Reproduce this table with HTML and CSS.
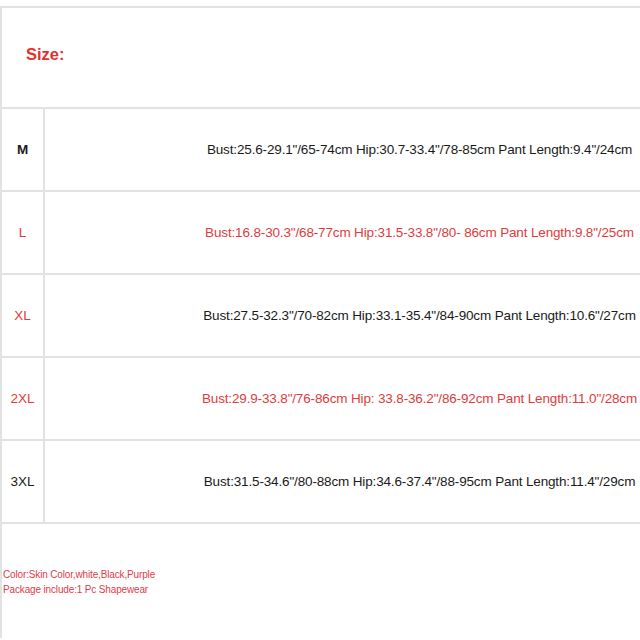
FILE: index.html
```html
<!DOCTYPE html>
<html>
<head>
<meta charset="utf-8">
<link rel="stylesheet" href="styles.css">
</head>
<body>
<div class="page">
  <div class="chart">
    <div class="head"><span class="title">Size:</span></div>
    <div class="row">
      <div class="size bold">M</div>
      <div class="spec">Bust:25.6-29.1"/65-74cm Hip:30.7-33.4"/78-85cm Pant Length:9.4"/24cm</div>
    </div>
    <div class="row red">
      <div class="size">L</div>
      <div class="spec">Bust:16.8-30.3"/68-77cm Hip:31.5-33.8"/80- 86cm Pant Length:9.8"/25cm</div>
    </div>
    <div class="row">
      <div class="size red">XL</div>
      <div class="spec">Bust:27.5-32.3"/70-82cm Hip:33.1-35.4"/84-90cm Pant Length:10.6"/27cm</div>
    </div>
    <div class="row red">
      <div class="size">2XL</div>
      <div class="spec">Bust:29.9-33.8"/76-86cm Hip: 33.8-36.2"/86-92cm Pant Length:11.0"/28cm</div>
    </div>
    <div class="row">
      <div class="size">3XL</div>
      <div class="spec">Bust:31.5-34.6"/80-88cm Hip:34.6-37.4"/88-95cm Pant Length:11.4"/29cm</div>
    </div>
    <div class="foot">
      <p>Color:Skin Color,white,Black,Purple</p>
      <p>Package include:1 Pc Shapewear</p>
    </div>
  </div>
</div>
</body>
</html>
```
FILE: styles.css
```css
html, body {
  margin: 0;
  padding: 0;
  background: #fff;
  overflow: hidden;
}
.page {
  width: 640px;
  height: 640px;
  padding-top: 6px;
  box-sizing: border-box;
  font-family: "Liberation Sans", Arial, sans-serif;
  color: #1a1a1a;
}
.chart {
  border-top: 2px solid #e2e2e2;
  border-left: 2px solid #e2e2e2;
  height: 632px;
  box-sizing: border-box;
}
.head {
  height: 99px;
  display: flex;
  align-items: center;
  padding-left: 24px;
  border-bottom: 2px solid #e2e2e2;
}
.title {
  color: #e0322f;
  font-weight: bold;
  font-size: 16.5px;
  margin-top: -6px;
}
.row {
  display: flex;
  height: 81px;
  border-bottom: 2px solid #e2e2e2;
}
.size {
  flex: 0 0 41px;
  border-right: 2px solid #e2e2e2;
  display: flex;
  align-items: center;
  justify-content: center;
  font-size: 13.5px;
  padding-bottom: 1px;
}
.bold { font-weight: bold; }
.spec {
  flex: 1;
  min-width: 0;
  display: flex;
  align-items: center;
  justify-content: center;
  padding-left: 154px;
  padding-bottom: 1px;
  font-size: 13.5px;
  letter-spacing: -0.15px;
  white-space: nowrap;
}
.red { color: #e03c3c; }
.foot {
  padding-top: 43px;
  padding-left: 1px;
  color: #e03c4a;
  font-size: 10px;
  letter-spacing: -0.15px;
}
.foot p {
  margin: 0;
  line-height: 15px;
}
```
